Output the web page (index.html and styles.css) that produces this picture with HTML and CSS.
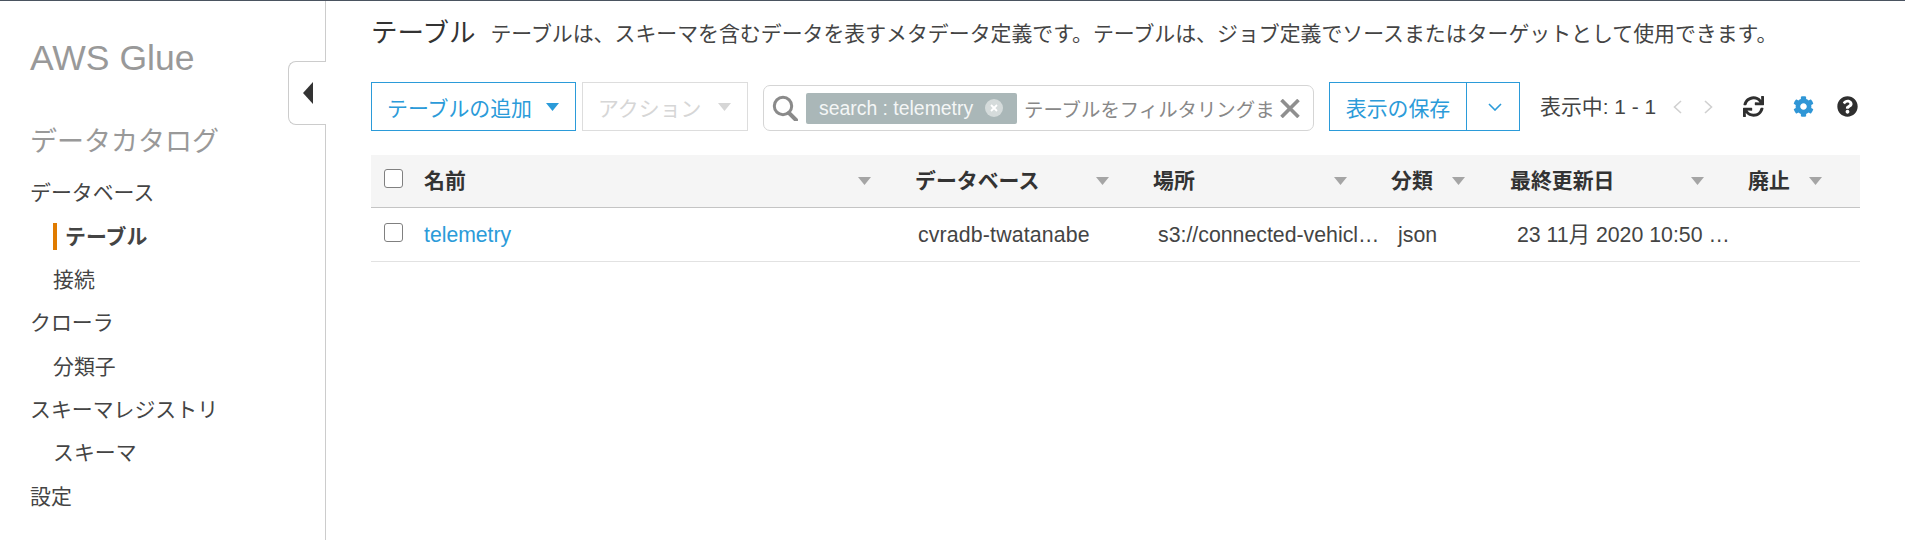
FILE: index.html
```html
<!DOCTYPE html>
<html lang="ja">
<head>
<meta charset="utf-8">
<title>AWS Glue テーブル</title>
<link rel="stylesheet" href="styles.css">
</head>
<body>
<div class="page">
  <aside class="sidebar">
    <div class="logo">AWS Glue</div>
    <div class="catalog">データカタログ</div>
    <nav class="nav">
      <a class="nav-item">データベース</a>
      <a class="nav-item sub active">テーブル</a>
      <a class="nav-item sub">接続</a>
      <a class="nav-item">クローラ</a>
      <a class="nav-item sub">分類子</a>
      <a class="nav-item">スキーマレジストリ</a>
      <a class="nav-item sub">スキーマ</a>
      <a class="nav-item">設定</a>
    </nav>
    <div class="toggle"><svg class="toggle-icon" viewBox="0 0 10 22"><path d="M10 0V22L0 11Z"/></svg></div>
  </aside>
  <main class="main">
    <div class="title-row">
      <h1 class="title">テーブル</h1>
      <p class="desc">テーブルは、スキーマを含むデータを表すメタデータ定義です。テーブルは、ジョブ定義でソースまたはターゲットとして使用できます。</p>
    </div>
    <div class="toolbar">
      <button class="btn btn-add">テーブルの追加<svg class="caret" viewBox="0 0 13 8"><path d="M0 0H13L6.5 8Z"/></svg></button>
      <button class="btn btn-action">アクション<svg class="caret" viewBox="0 0 13 8"><path d="M0 0H13L6.5 8Z"/></svg></button>
      <div class="search">
        <svg class="search-icon" viewBox="0 0 26 26"><circle cx="11" cy="11" r="8.7" fill="none" stroke="#8a8a8a" stroke-width="3"/><path d="M17 18L24 25" stroke="#8a8a8a" stroke-width="4" stroke-linecap="round"/></svg>
        <span class="token">search : telemetry<svg class="token-x" viewBox="0 0 18 18"><circle cx="9" cy="9" r="9" fill="#d5dbdb"/><path d="M6 6L12 12M12 6L6 12" stroke="#fff" stroke-width="1.8"/></svg></span>
        <span class="placeholder">テーブルをフィルタリングま</span>
        <svg class="clear" viewBox="0 0 20 19"><path d="M1.500 1L18.500 18M18.500 1L1.500 18" stroke="#8f8f8f" stroke-width="3.6"/></svg>
      </div>
      <div class="split">
        <button class="split-main">表示の保存</button>
        <button class="split-more"><svg class="chev-down" viewBox="0 0 14 8"><path d="M1 1L7 7L13 1" fill="none" stroke="#2b9bd9" stroke-width="1.6"/></svg></button>
      </div>
      <span class="count">表示中: 1 - 1</span>
      <svg class="pager" viewBox="0 0 9 14"><path d="M8 1L1.500 7L8 13" fill="none" stroke="#d0d0d0" stroke-width="1.6"/></svg>
      <svg class="pager next" viewBox="0 0 9 14"><path d="M1 1L7.500 7L1 13" fill="none" stroke="#d0d0d0" stroke-width="1.6"/></svg>
      <svg class="tool refresh" viewBox="0 0 512 512"><path fill="#2f2f2f" d="M440.65 12.57l4 82.77A247.16 247.16 0 0 0 255.83 8C134.73 8 33.91 94.92 12.29 209.82A12 12 0 0 0 24.09 224h49.05a12 12 0 0 0 11.67-9.26 175.91 175.91 0 0 1 317-56.94l-101.46-4.86a12 12 0 0 0-12.57 12v47.41a12 12 0 0 0 12 12H500a12 12 0 0 0 12-12V12a12 12 0 0 0-12-12h-47.37a12 12 0 0 0-11.98 12.57zM255.83 432a175.61 175.61 0 0 1-146-77.8l101.8 4.87a12 12 0 0 0 12.57-12v-47.4a12 12 0 0 0-12-12H12a12 12 0 0 0-12 12V500a12 12 0 0 0 12 12h47.35a12 12 0 0 0 12-12.6l-4.15-82.57A247.17 247.17 0 0 0 255.83 504c121.11 0 221.93-86.92 243.55-201.82a12 12 0 0 0-11.8-14.18h-49.05a12 12 0 0 0-11.67 9.26A175.86 175.86 0 0 1 255.83 432z"/></svg>
      <svg class="tool gear" viewBox="0 0 512 512"><path fill="#2f96d6" d="M487.4 315.7l-42.6-24.6c4.3-23.2 4.3-47 0-70.2l42.6-24.6c4.9-2.8 7.1-8.6 5.5-14-11.1-35.6-30-67.8-54.7-94.6-3.8-4.1-10-5.1-14.8-2.3L380.8 110c-17.9-15.4-38.5-27.3-60.8-35.1V25.8c0-5.6-3.9-10.5-9.4-11.7-36.7-8.2-74.3-7.8-109.2 0-5.5 1.2-9.4 6.1-9.4 11.7V75c-22.2 7.9-42.8 19.8-60.8 35.1L88.7 85.5c-4.9-2.8-11-1.9-14.8 2.3-24.7 26.7-43.6 58.9-54.7 94.6-1.7 5.4.6 11.2 5.5 14L67.3 221c-4.3 23.2-4.3 47 0 70.2l-42.6 24.6c-4.9 2.8-7.1 8.6-5.5 14 11.1 35.6 30 67.8 54.7 94.6 3.8 4.1 10 5.1 14.8 2.3l42.6-24.6c17.9 15.4 38.5 27.3 60.8 35.1v49.2c0 5.6 3.9 10.5 9.4 11.7 36.7 8.2 74.3 7.8 109.2 0 5.5-1.2 9.4-6.1 9.4-11.7v-49.2c22.2-7.9 42.8-19.8 60.8-35.1l42.6 24.6c4.9 2.8 11 1.9 14.8-2.3 24.7-26.7 43.6-58.9 54.7-94.6 1.5-5.5-.7-11.3-5.6-14.1zM256 336c-44.1 0-80-35.9-80-80s35.9-80 80-80 80 35.9 80 80-35.9 80-80 80z"/></svg>
      <svg class="tool help" viewBox="0 0 512 512"><path fill="#2f2f2f" d="M504 256c0 136.997-111.043 248-248 248S8 392.997 8 256C8 119.083 119.043 8 256 8s248 111.083 248 248zM262.655 90c-54.497 0-89.255 22.957-116.549 63.758-3.536 5.286-2.353 12.415 2.715 16.258l34.699 26.31c5.205 3.947 12.621 3.008 16.665-2.122 17.864-22.658 30.113-35.797 57.303-35.797 20.429 0 45.698 13.148 45.698 32.958 0 14.976-12.363 22.667-32.534 33.976C247.128 238.528 216 254.941 216 296v4c0 6.627 5.373 12 12 12h56c6.627 0 12-5.373 12-12v-1.333c0-28.462 83.186-29.647 83.186-106.667 0-58.002-60.165-102-116.531-102zM256 338c-25.365 0-46 20.635-46 46 0 25.364 20.635 46 46 46s46-20.636 46-46c0-25.365-20.635-46-46-46z"/></svg>
    </div>
    <div class="table">
      <div class="row head">
        <div class="cell check"><span class="checkbox"></span></div>
        <div class="cell hcell"><span>名前</span><svg class="sort" viewBox="0 0 13 8"><path d="M0 0H13L6.500 8Z"/></svg></div>
        <div class="cell hcell"><span>データベース</span><svg class="sort" viewBox="0 0 13 8"><path d="M0 0H13L6.500 8Z"/></svg></div>
        <div class="cell hcell"><span>場所</span><svg class="sort" viewBox="0 0 13 8"><path d="M0 0H13L6.500 8Z"/></svg></div>
        <div class="cell hcell narrow"><span>分類</span><svg class="sort" viewBox="0 0 13 8"><path d="M0 0H13L6.500 8Z"/></svg></div>
        <div class="cell hcell"><span>最終更新日</span><svg class="sort" viewBox="0 0 13 8"><path d="M0 0H13L6.500 8Z"/></svg></div>
        <div class="cell hcell last"><span>廃止</span><svg class="sort" viewBox="0 0 13 8"><path d="M0 0H13L6.500 8Z"/></svg></div>
      </div>
      <div class="row body">
        <div class="cell check"><span class="checkbox"></span></div>
        <div class="cell name"><a class="link">telemetry</a></div>
        <div class="cell data db">cvradb-twatanabe</div>
        <div class="cell data loc">s3://connected-vehicle-datalake/telemetry/</div>
        <div class="cell data cls">json</div>
        <div class="cell data date">23 11月 2020 10:50 午前 UTC+9</div>
        <div class="cell data"></div>
      </div>
    </div>
  </main>
</div>
</body>
</html>
```
FILE: styles.css
```css
* { box-sizing: border-box; }
html, body { margin: 0; padding: 0; height: 100%; background: #fff; overflow: hidden; }
body {
  font-family: "Liberation Sans", "Noto Sans CJK JP", sans-serif;
  font-size: 20.9px;
  color: #444;
}
.page { display: flex; height: 540px; border-top: 1px solid #4a5360; }

.sidebar { position: relative; flex: 0 0 326px; border-right: 1px solid #ccc; padding: 35px 0 0 30px; }
.logo { font-size: 35.5px; line-height: 44px; color: #999; }
.catalog { font-size: 27px; line-height: 44px; margin-top: 40px; margin-bottom: 7px; color: #999; }
.nav { display: flex; flex-direction: column; }
.nav-item { height: 43.4px; line-height: 43.4px; color: #444; }
.nav-item.sub { margin-left: 23px; }
.nav-item.active { font-weight: 700; border-left: 4px solid #e07b00; margin-top: 8.4px; margin-bottom: 8px; height: 27px; line-height: 27px; padding-left: 8px; }
.toggle {
  position: absolute; top: 60px; right: -1px; width: 38px; height: 64px;
  background: #fff; border: 1px solid #ccc; border-right: 0;
  border-radius: 8px 0 0 8px;
  display: flex; align-items: center; padding-left: 14px;
}
.toggle-icon { width: 10px; height: 22px; fill: #333; }

.main { flex: 1; padding-left: 45px; padding-right: 45px; min-width: 0; }
.title-row { display: flex; align-items: center; height: 58px; margin-bottom: 23px; }
.title { margin: 0 15px 0 0; font-size: 26.5px; font-weight: 400; color: #333; }
.desc { margin: 4px 0 0; color: #444; white-space: nowrap; }

.toolbar { display: flex; align-items: flex-end; height: 49px; margin-bottom: 24px; }
.btn {
  display: flex; align-items: center; justify-content: space-between;
  height: 49px; padding: 0 16px 0 15px; font: inherit; background: #fff;
  border: 1px solid #2b9bd9; color: #2b9bd9;
}
.caret { width: 13px; height: 8px; fill: currentColor; }
.btn-add { width: 205px; margin-right: 6px; }
.btn-action { width: 166px; margin-right: 15px; border-color: #ddd; color: #d6d6d6; }
.search {
  display: flex; align-items: center; width: 551px; height: 46px; margin-right: 15px;
  border: 1px solid #d5d5d5; border-radius: 7px; padding: 0 13px 0 8px;
}
.search-icon { flex: none; width: 26px; height: 26px; margin-right: 8px; }
.token {
  flex: none; display: flex; align-items: center; justify-content: space-between;
  width: 211px; height: 31px; padding: 0 14px 0 13px; background: #aab7b8; color: #f4f6f6;
  border-radius: 2px; font-size: 19.4px;
}
.token-x { width: 18px; height: 18px; }
.placeholder { flex: 1; min-width: 0; margin-left: 7px; overflow: hidden; white-space: nowrap; color: #888; font-size: 19.4px; }
.clear { flex: none; width: 20px; height: 19px; margin-left: 4px; }
.split { display: flex; height: 49px; width: 191px; margin-right: 20px; border: 1px solid #2b9bd9; }
.split-main { width: 137px; padding: 0; font: inherit; color: #2b9bd9; background: #fff; border: 0; border-right: 1px solid #2b9bd9; }
.split-more { flex: 1; display: flex; align-items: center; justify-content: center; padding: 0 0 0 3px; background: #fff; border: 0; }
.chev-down { width: 14px; height: 8px; }
.count { flex: none; width: 133px; height: 49px; line-height: 49px; color: #444; white-space: nowrap; }
.pager { flex: none; width: 9px; height: 14px; margin-right: 22px; margin-bottom: 17px; }
.pager.next { margin-right: 30px; }
.tool { flex: none; width: 21px; height: 21px; margin-bottom: 14px; }
.gear { margin-left: 29px; }
.help { margin-left: 23px; }

.row { display: grid; grid-template-columns: 53px 491px 238px 238px 119px 238px 112px; }
.head { height: 53px; background: #f5f5f5; border-bottom: 1px solid #c4c4c4; color: #333; font-weight: 700; }
.body { height: 54px; border-bottom: 1px solid #e2e2e2; }
.cell { display: flex; align-items: center; min-width: 0; }
.check { padding-left: 13px; }
.checkbox { width: 19px; height: 19px; background: #fff; border: 1px solid #808080; border-radius: 3px; margin-bottom: 5px; }
.hcell { justify-content: space-between; padding-right: 44px; }
.hcell span { margin-bottom: 4px; }
.hcell .sort { margin-bottom: 1px; }
.hcell.narrow { padding-right: 45px; }
.hcell.last { padding-right: 38px; }
.sort { width: 13px; height: 8px; fill: #a5a5a5; }
.link { color: #2b9bd9; font-size: 21.2px; }
.data { display: block; line-height: 54px; height: 53px; overflow: hidden; white-space: nowrap; text-overflow: ellipsis; color: #444; font-size: 21.3px; }
.db { padding-left: 3px; letter-spacing: 0.15px; }
.loc { padding-left: 5px; padding-right: 7px; }
.cls { padding-left: 7px; }
.date { padding-left: 7px; padding-right: 11px; }
```
